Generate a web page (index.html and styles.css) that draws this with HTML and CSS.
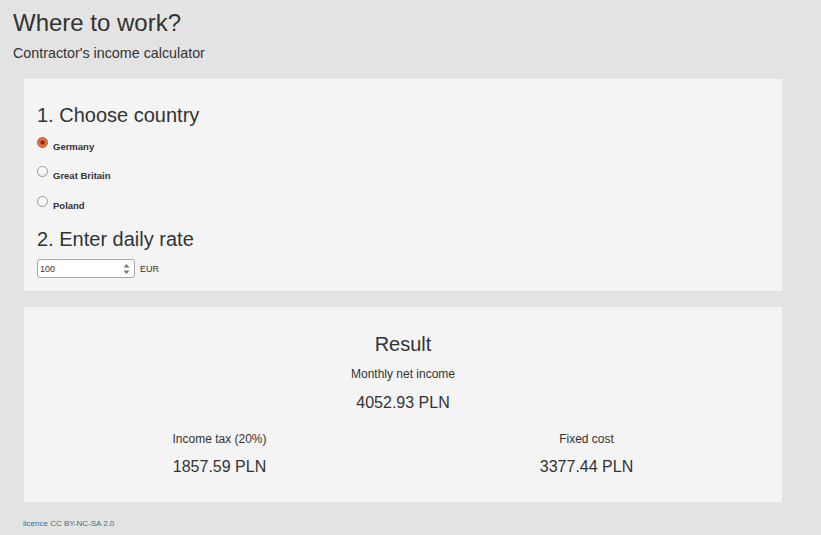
FILE: index.html
```html
<!DOCTYPE html>
<html lang="en">
<head>
<meta charset="utf-8">
<title>Where to work?</title>
<link rel="stylesheet" href="styles.css">
</head>
<body>
<header class="page-head">
  <h1 class="title">Where to work?</h1>
  <p class="subtitle">Contractor's income calculator</p>
</header>

<section class="well form-well">
  <h2 class="step">1. Choose country</h2>
  <label class="radio-row"><span class="radio checked"></span><span class="radio-label">Germany</span></label>
  <label class="radio-row"><span class="radio"></span><span class="radio-label">Great Britain</span></label>
  <label class="radio-row"><span class="radio"></span><span class="radio-label">Poland</span></label>
  <h2 class="step step-second">2. Enter daily rate</h2>
  <div class="rate-row">
    <div class="numbox">
      <input class="num-input" type="text" value="100">
      <svg class="spin" width="9" height="14" viewBox="0 0 9 14">
        <path d="M1.5 5.5 L4.5 2 L7.5 5.5 Z" fill="#777"/>
        <path d="M1.5 8.5 L4.5 12 L7.5 8.5 Z" fill="#777"/>
      </svg>
    </div>
    <span class="currency">EUR</span>
  </div>
</section>

<section class="well result-well">
  <h2 class="result-title">Result</h2>
  <div class="label">Monthly net income</div>
  <div class="value">4052.93 PLN</div>
  <div class="cols">
    <div class="col">
      <div class="label">Income tax (20%)</div>
      <div class="value value-sub">1857.59 PLN</div>
    </div>
    <div class="col">
      <div class="label">Fixed cost</div>
      <div class="value value-sub">3377.44 PLN</div>
    </div>
  </div>
</section>

<footer class="foot"><a class="licence" href="#">licence CC BY-NC-SA 2.0</a></footer>
</body>
</html>
```

FILE: styles.css
```css
html, body {
  margin: 0;
  padding: 0;
}
body {
  background: #e3e3e3;
  color: #333;
  font-family: "Liberation Sans", Arial, sans-serif;
  width: 821px;
  height: 535px;
  overflow: hidden;
}
.page-head {
  padding: 9px 0 0 13px;
}
.title {
  margin: 0;
  font-size: 24px;
  line-height: 28px;
  font-weight: 400;
}
.subtitle {
  margin: 7px 0 0;
  font-size: 14.3px;
  line-height: 18px;
}
.well {
  background: #f4f4f4;
  margin: 0 39px 0 24px;
  box-sizing: border-box;
}
.form-well {
  margin-top: 17px;
  height: 212px;
  padding: 24px 13px 0;
}
.step {
  margin: 0;
  font-size: 20px;
  line-height: 24px;
  font-weight: 400;
}
.radio-row {
  display: flex;
  align-items: center;
  height: 29.5px;
  gap: 5px;
}
.radio-row:first-of-type {
  margin-top: 5px;
}
.radio {
  width: 11px;
  height: 11px;
  border-radius: 50%;
  box-sizing: border-box;
  border: 1px solid #9a9a9a;
  background: linear-gradient(#fff, #f0f0f0);
  margin-bottom: 9px;
  flex: none;
}
.radio.checked {
  border-color: #c9542a;
  background: radial-gradient(circle, #6e2a12 0, #7a2e14 1.6px, #e2683a 2.4px, #f07a48 100%);
}
.radio-label {
  font-size: 9.5px;
  font-weight: 700;
  line-height: 12px;
}
.step-second {
  margin-top: 6.5px;
}
.rate-row {
  display: flex;
  align-items: center;
  gap: 5px;
  margin-top: 8px;
}
.numbox {
  display: flex;
  align-items: center;
  width: 98px;
  height: 19px;
  box-sizing: border-box;
  border: 1px solid #a8a8a8;
  border-radius: 3px;
  background: #fff;
  padding: 0 3px 0 2px;
}
.num-input {
  flex: 1;
  min-width: 0;
  border: 0;
  outline: 0;
  padding: 0;
  margin: 0;
  background: transparent;
  font-family: "Liberation Sans", Arial, sans-serif;
  font-size: 9px;
  color: #333;
  height: 15px;
}
.spin {
  flex: none;
}
.currency {
  font-size: 9px;
  color: #333;
}
.result-well {
  margin-top: 16px;
  height: 195px;
  padding: 24.5px 12px 0;
  text-align: center;
}
.result-title {
  margin: 0;
  font-size: 20px;
  line-height: 24px;
  font-weight: 400;
}
.label {
  font-size: 12px;
  line-height: 16px;
  margin-top: 10px;
}
.value {
  font-size: 16px;
  line-height: 20px;
  margin-top: 11.5px;
}
.cols {
  display: grid;
  grid-template-columns: 1fr 1fr;
  margin-top: 7.5px;
}
.value-sub {
  margin-top: 10.5px;
}
.foot {
  padding: 17px 0 0 23px;
  font-size: 8px;
  line-height: 10px;
}
.licence {
  color: #31708f;
  text-decoration: none;
}
```
